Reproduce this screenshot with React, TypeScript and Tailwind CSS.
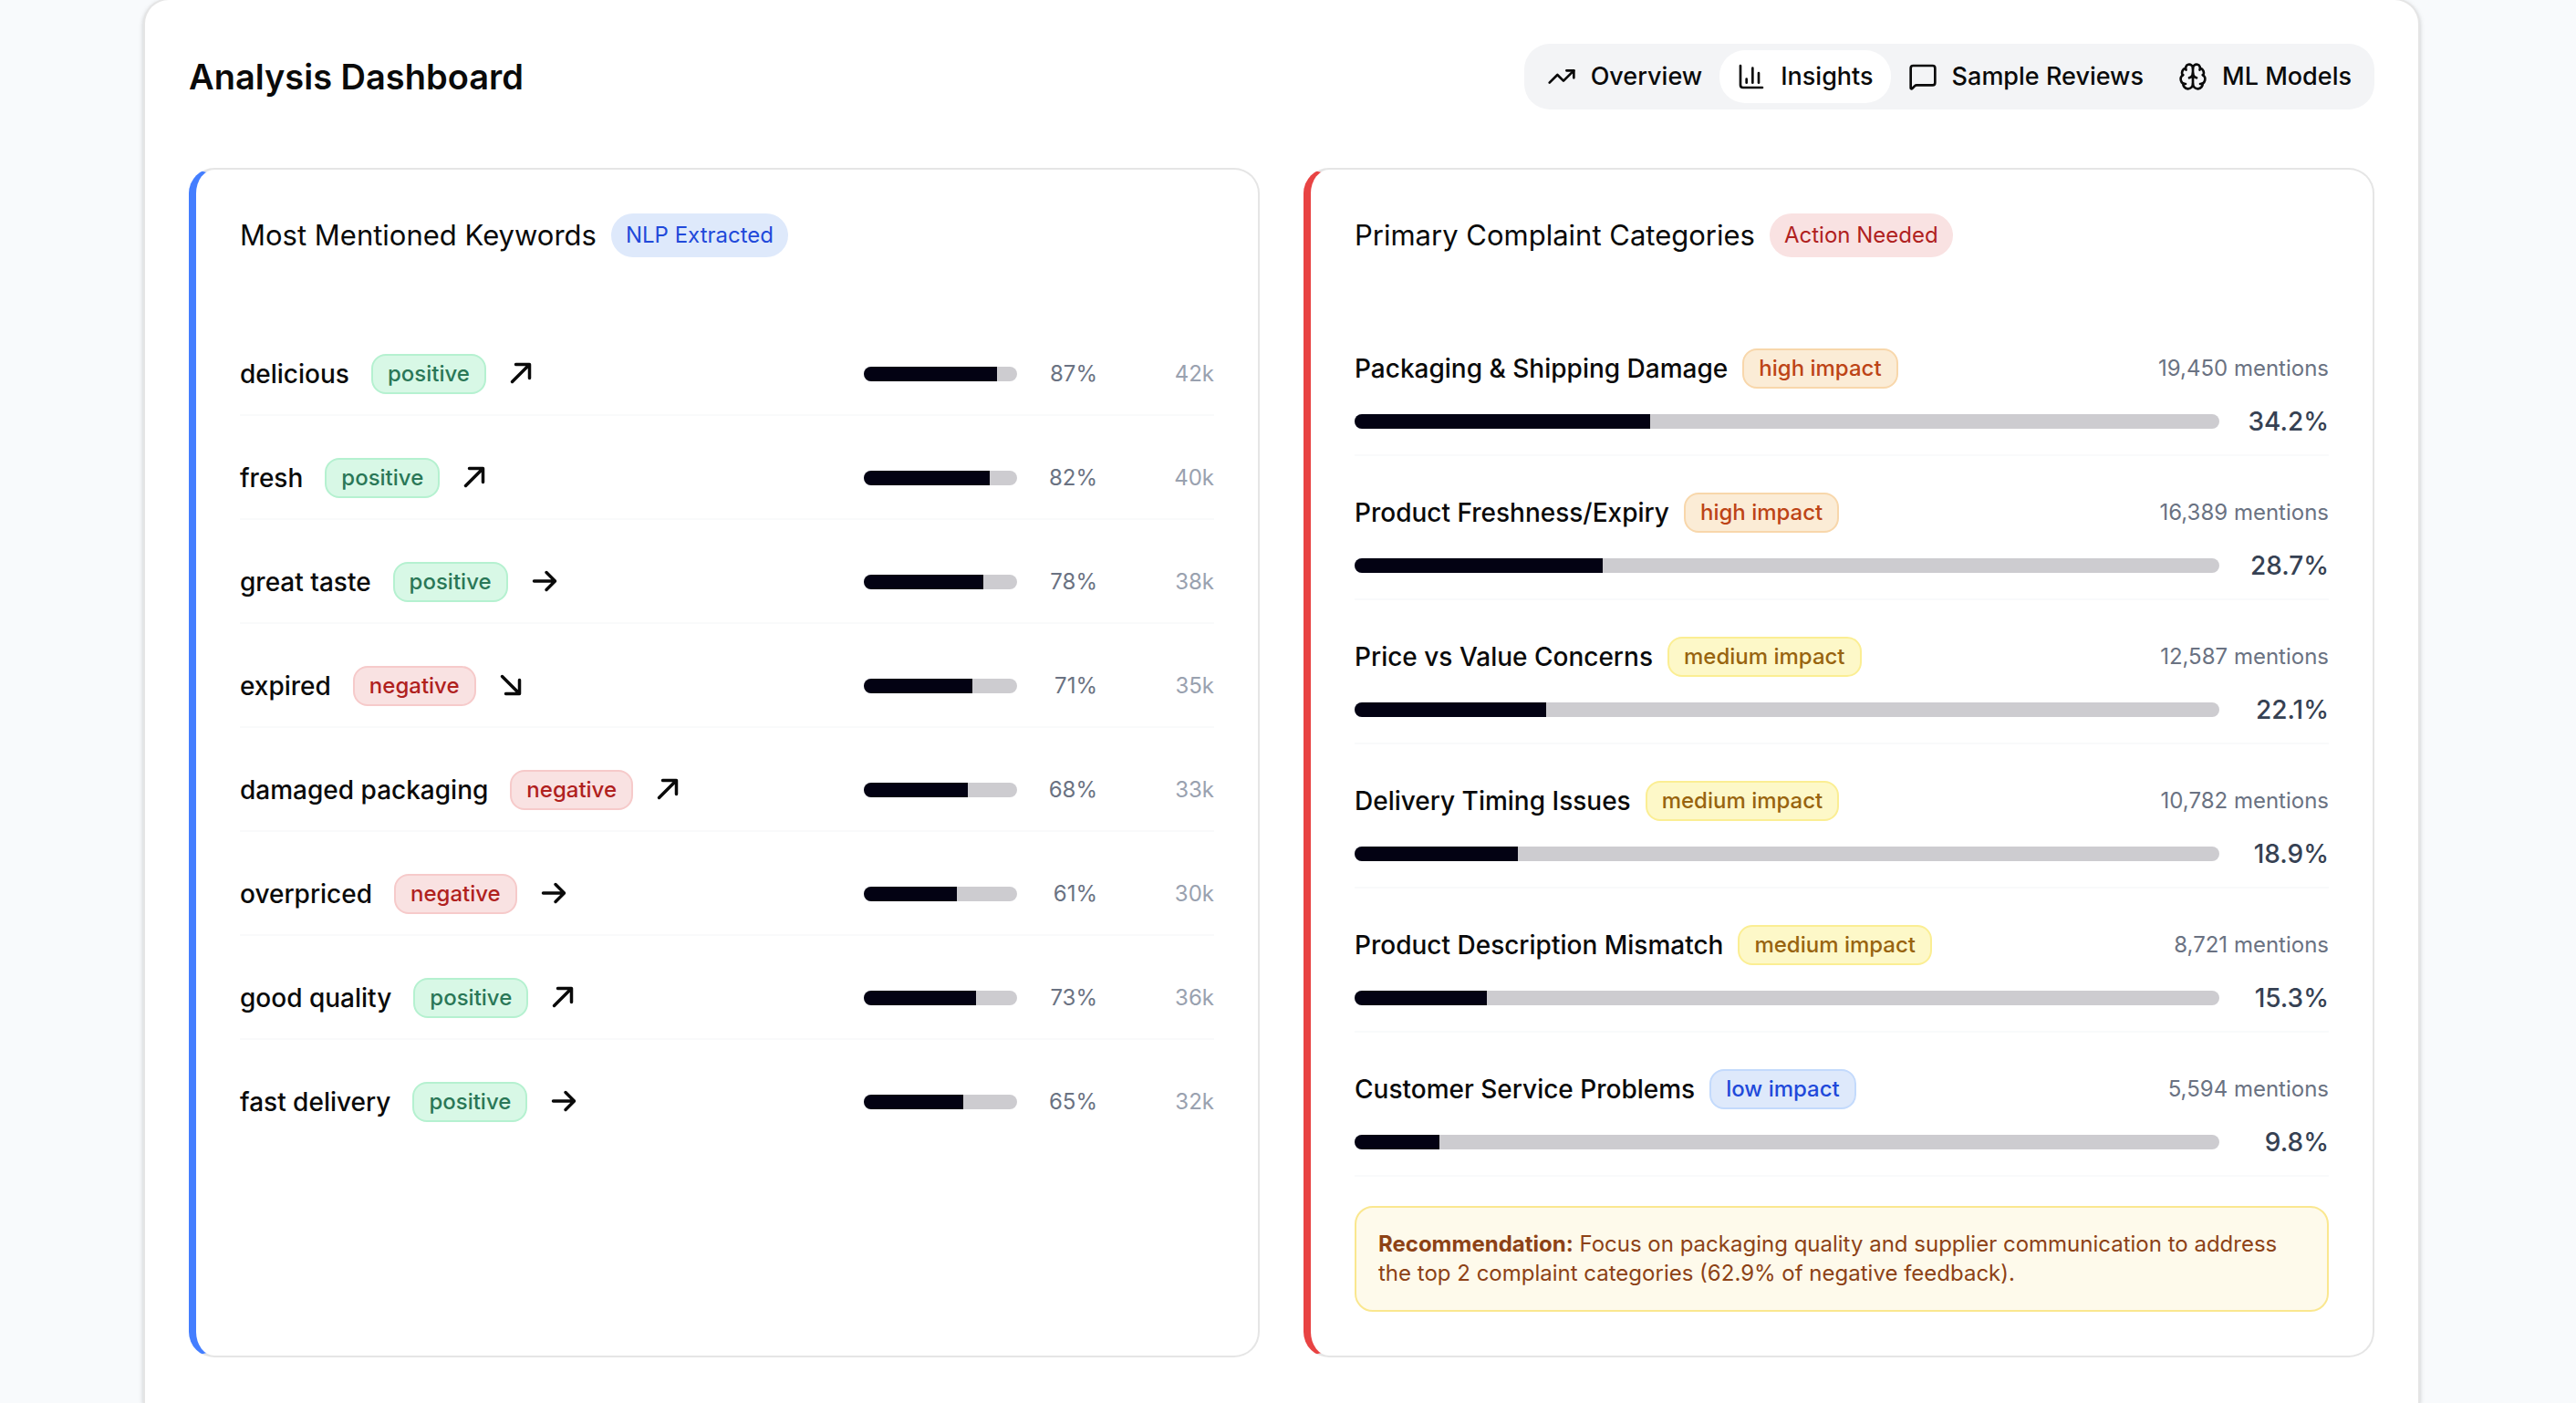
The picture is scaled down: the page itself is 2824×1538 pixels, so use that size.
import type { ReactNode } from "react";
import { Brain, ChartColumn, MessageSquare, TrendingUp } from "lucide-react";

type Trend = "up" | "flat" | "down";
type Sentiment = "positive" | "negative";
type Impact = "high" | "medium" | "low";

const keywords: { word: string; sentiment: Sentiment; trend: Trend; score: number; count: string }[] = [
  { word: "delicious", sentiment: "positive", trend: "up", score: 87, count: "42k" },
  { word: "fresh", sentiment: "positive", trend: "up", score: 82, count: "40k" },
  { word: "great taste", sentiment: "positive", trend: "flat", score: 78, count: "38k" },
  { word: "expired", sentiment: "negative", trend: "down", score: 71, count: "35k" },
  { word: "damaged packaging", sentiment: "negative", trend: "up", score: 68, count: "33k" },
  { word: "overpriced", sentiment: "negative", trend: "flat", score: 61, count: "30k" },
  { word: "good quality", sentiment: "positive", trend: "up", score: 73, count: "36k" },
  { word: "fast delivery", sentiment: "positive", trend: "flat", score: 65, count: "32k" },
];

const complaints: { name: string; impact: Impact; mentions: string; share: number }[] = [
  { name: "Packaging & Shipping Damage", impact: "high", mentions: "19,450", share: 34.2 },
  { name: "Product Freshness/Expiry", impact: "high", mentions: "16,389", share: 28.7 },
  { name: "Price vs Value Concerns", impact: "medium", mentions: "12,587", share: 22.1 },
  { name: "Delivery Timing Issues", impact: "medium", mentions: "10,782", share: 18.9 },
  { name: "Product Description Mismatch", impact: "medium", mentions: "8,721", share: 15.3 },
  { name: "Customer Service Problems", impact: "low", mentions: "5,594", share: 9.8 },
];

const tabs = [
  { label: "Overview", Icon: TrendingUp, active: false },
  { label: "Insights", Icon: ChartColumn, active: true },
  { label: "Sample Reviews", Icon: MessageSquare, active: false },
  { label: "ML Models", Icon: Brain, active: false },
];

const tagStyles = {
  positive: "border-[#b5f1d0] bg-[#d8f8e6] text-[#2a7757]",
  negative: "border-[#f6caca] bg-[#f9e2e2] text-[#b0211e]",
  high: "border-[#f8d7ab] bg-[#fbecd6] text-[#bd4416]",
  medium: "border-[#fbee93] bg-[#fdf8c8] text-[#98640f]",
  low: "border-[#c3dafc] bg-[#dee9fb] text-[#2149da]",
};

const trendPaths: Record<Trend, string> = {
  up: "M4.5 23.5 22.5 5.5M8.5 4.5H23.5V19.5",
  flat: "M4.5 14H27M18 4.5 27.5 14 18 23.5",
  down: "M4.5 4.5 22.5 22.5M8.5 23.5H23.5V8.5",
};

function Tag({ kind, children }: { kind: keyof typeof tagStyles; children: ReactNode }) {
  return (
    <span
      className={`flex h-11 items-center rounded-2xl border-2 px-4 text-2xl font-medium whitespace-nowrap ${tagStyles[kind]}`}
    >
      {children}
    </span>
  );
}

function TrendArrow({ trend }: { trend: Trend }) {
  return (
    <svg
      className="h-[30px] w-[30px]"
      viewBox="0 0 30 30"
      fill="none"
      stroke="currentColor"
      strokeWidth="3.5"
      strokeLinecap="round"
      strokeLinejoin="round"
      role="img"
      aria-label={`trend ${trend}`}
    >
      <path d={trendPaths[trend]} />
    </svg>
  );
}

function Meter({ value, label, className }: { value: number; label: string; className: string }) {
  return (
    <div
      role="progressbar"
      aria-label={label}
      aria-valuenow={value}
      aria-valuemin={0}
      aria-valuemax={100}
      className={`h-4 overflow-hidden rounded-full bg-[#cdccd0] ${className}`}
    >
      <div className="h-full bg-[#030213]" style={{ width: `${value}%` }} />
    </div>
  );
}

function Card({
  title,
  badge,
  badgeClass,
  accentClass,
  children,
}: {
  title: string;
  badge: string;
  badgeClass: string;
  accentClass: string;
  children: ReactNode;
}) {
  return (
    <section
      className={`flex flex-col gap-[84px] rounded-[28px] border-2 border-l-8 border-[#e5e5e5] bg-white p-12 ${accentClass}`}
    >
      <header className="flex h-12 items-center gap-4">
        <h2 className="text-[31px] leading-[48px]">{title}</h2>
        <span className={`flex h-12 items-center rounded-full px-4 text-2xl ${badgeClass}`}>{badge}</span>
      </header>
      <div>{children}</div>
    </section>
  );
}

export default function App() {
  return (
    <div className="flex min-h-screen flex-col overflow-hidden bg-[#f8fafc] pr-[171px] pl-[157px] font-['Inter',sans-serif] text-[#0a0a0a]">
      <main className="-mt-0.5 flex-1 rounded-t-[28px] border-2 border-b-0 border-[#e5e5e5] bg-white p-12 shadow-[0_2px_6px_rgba(0,0,0,0.1),0_2px_4px_rgba(0,0,0,0.1)]">
        <div className="flex h-18 items-center justify-between">
          <h1 className="text-[38px] leading-[56px] font-semibold">Analysis Dashboard</h1>
          <div role="tablist" aria-label="Dashboard sections" className="flex h-18 items-center rounded-[28px] bg-[#f3f4f6] px-1.5">
            {tabs.map(({ label, Icon, active }) => (
              <button
                key={label}
                type="button"
                role="tab"
                aria-selected={active}
                className={`flex h-[58px] items-center gap-4 rounded-[28px] px-[19px] text-[27px] font-medium ${active ? "bg-white" : ""}`}
              >
                <Icon className="h-8 w-8" strokeWidth={2} />
                {label}
              </button>
            ))}
          </div>
        </div>

        <div className="mt-16 grid grid-cols-2 gap-12">
          <Card
            title="Most Mentioned Keywords"
            badge="NLP Extracted"
            badgeClass="bg-[#dee9fb] text-[#2149da]"
            accentClass="border-l-[#447eff]"
          >
            <ul className="flex flex-col gap-6">
              {keywords.map((k) => (
                <li
                  key={k.word}
                  className="flex h-[90px] items-center justify-between border-b-2 border-[#f9fafb] last:border-transparent"
                >
                  <div className="flex items-center gap-6">
                    <span className="text-[28px] leading-10 font-medium">{k.word}</span>
                    <Tag kind={k.sentiment}>{k.sentiment}</Tag>
                    <TrendArrow trend={k.trend} />
                  </div>
                  <div className="flex items-center gap-6 text-right text-2xl">
                    <Meter value={k.score} label={k.word} className="w-[168px]" />
                    <span className="w-16 text-[#6a7282]">{k.score}%</span>
                    <span className="w-[104px] text-[#99a1af]">{k.count}</span>
                  </div>
                </li>
              ))}
            </ul>
          </Card>

          <Card
            title="Primary Complaint Categories"
            badge="Action Needed"
            badgeClass="bg-[#f9e2e2] text-[#b0211e]"
            accentClass="border-l-[#e84343]"
          >
            <ul className="flex flex-col gap-6">
              {complaints.map((c) => (
                <li key={c.name} className="flex flex-col gap-4 border-b-2 border-[#f9fafb] py-4">
                  <div className="flex items-center justify-between">
                    <div className="flex items-center gap-4">
                      <span className="text-[28px] leading-10 font-medium">{c.name}</span>
                      <Tag kind={c.impact}>{c.impact} impact</Tag>
                    </div>
                    <span className="text-2xl text-[#6a7282]">{c.mentions} mentions</span>
                  </div>
                  <div className="flex items-center gap-6">
                    <Meter value={c.share} label={c.name} className="flex-1" />
                    <span className="w-24 text-right text-[28px] leading-10 font-medium text-[#364153]">{c.share}%</span>
                  </div>
                </li>
              ))}
            </ul>
            <p className="mt-8 rounded-[20px] border-2 border-[#fae78f] bg-[#fefaeb] p-6 text-2xl leading-8 text-[#8d4216]">
              <strong className="font-bold">Recommendation:</strong> Focus on packaging quality and supplier communication
              to address the top 2 complaint categories (62.9% of negative feedback).
            </p>
          </Card>
        </div>
      </main>
    </div>
  );
}
